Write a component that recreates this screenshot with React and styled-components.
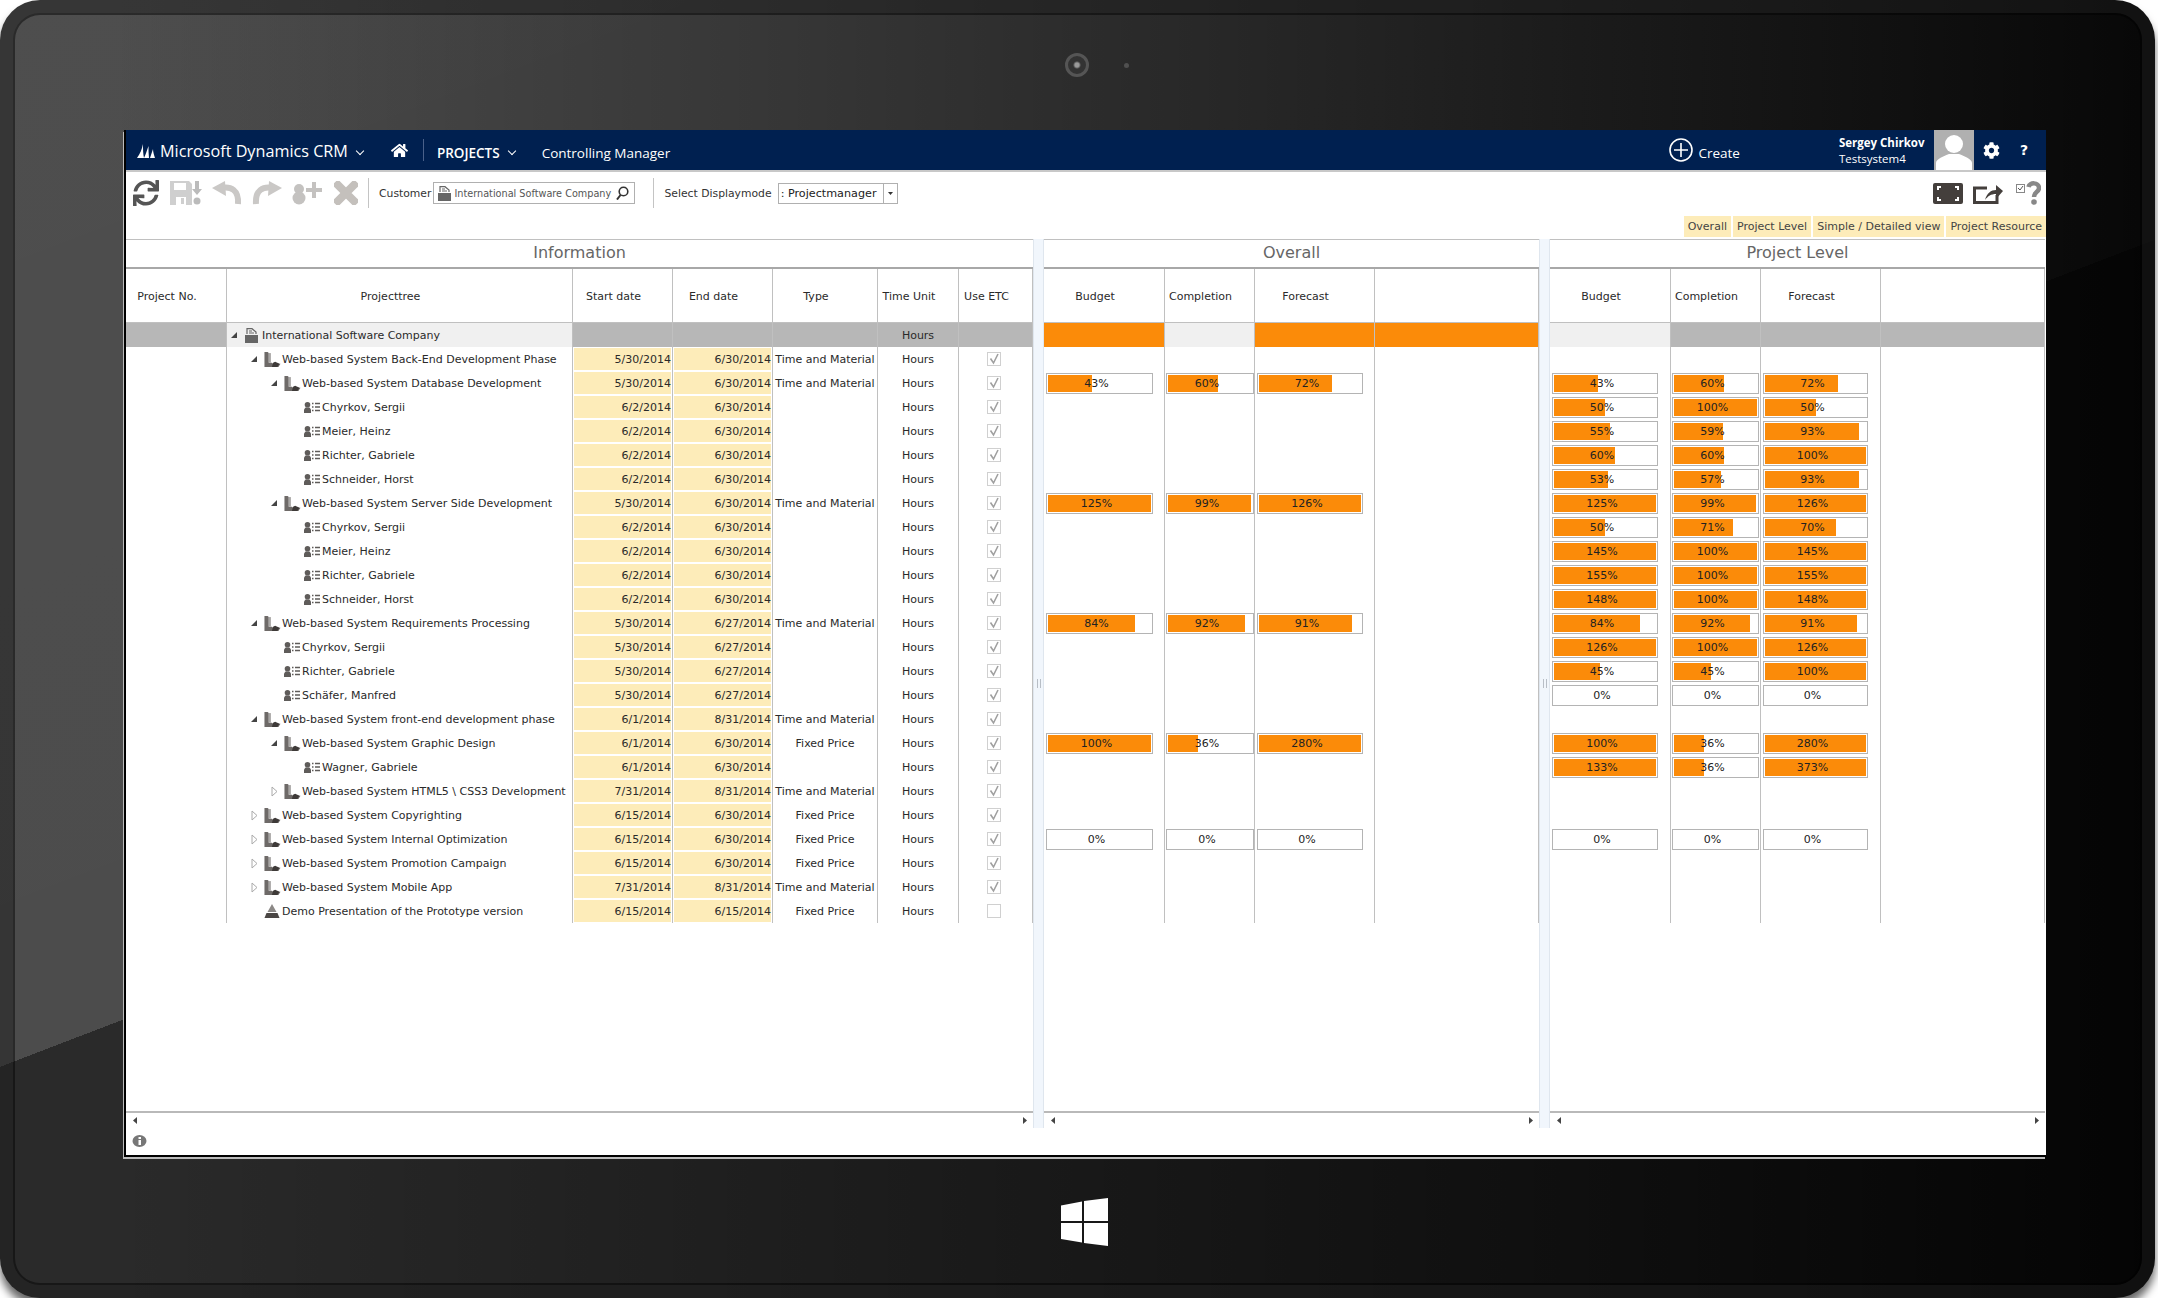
import styled, { createGlobalStyle } from "styled-components";
import { FaSync, FaCog, FaHome } from "react-icons/fa";

const GlobalStyle = createGlobalStyle`
	html, body {
		margin: 0;
		background: #fff;
	}
	* {
		box-sizing: border-box;
	}
`;

const TABLE_FONT = `"DejaVu Sans", Verdana, sans-serif`;
const NAV_FONT = `"Open Sans", "Noto Sans", sans-serif`;

const INFO_COLS = "101px 346px 100px 100px 105px 81px 74px";
const LEVEL_COLS = "121px 90px 120px 164px";

const T = "Time and Material";
const F = "Fixed Price";

// level, icon, open state, name, start, end, type, overall bars, project bars
const ROWS = [
	[1, "project", "open", "Web-based System Back-End Development Phase", "5/30/2014", "6/30/2014", T],
	[2, "project", "open", "Web-based System Database Development", "5/30/2014", "6/30/2014", T, [43, 60, 72], [43, 60, 72]],
	[3, "person", "", "Chyrkov, Sergii", "6/2/2014", "6/30/2014", "", null, [50, 100, 50]],
	[3, "person", "", "Meier, Heinz", "6/2/2014", "6/30/2014", "", null, [55, 59, 93]],
	[3, "person", "", "Richter, Gabriele", "6/2/2014", "6/30/2014", "", null, [60, 60, 100]],
	[3, "person", "", "Schneider, Horst", "6/2/2014", "6/30/2014", "", null, [53, 57, 93]],
	[2, "project", "open", "Web-based System Server Side Development", "5/30/2014", "6/30/2014", T, [125, 99, 126], [125, 99, 126]],
	[3, "person", "", "Chyrkov, Sergii", "6/2/2014", "6/30/2014", "", null, [50, 71, 70]],
	[3, "person", "", "Meier, Heinz", "6/2/2014", "6/30/2014", "", null, [145, 100, 145]],
	[3, "person", "", "Richter, Gabriele", "6/2/2014", "6/30/2014", "", null, [155, 100, 155]],
	[3, "person", "", "Schneider, Horst", "6/2/2014", "6/30/2014", "", null, [148, 100, 148]],
	[1, "project", "open", "Web-based System Requirements Processing", "5/30/2014", "6/27/2014", T, [84, 92, 91], [84, 92, 91]],
	[2, "person", "", "Chyrkov, Sergii", "5/30/2014", "6/27/2014", "", null, [126, 100, 126]],
	[2, "person", "", "Richter, Gabriele", "5/30/2014", "6/27/2014", "", null, [45, 45, 100]],
	[2, "person", "", "Schäfer, Manfred", "5/30/2014", "6/27/2014", "", null, [0, 0, 0]],
	[1, "project", "open", "Web-based System front-end development phase", "6/1/2014", "8/31/2014", T],
	[2, "project", "open", "Web-based System Graphic Design", "6/1/2014", "6/30/2014", F, [100, 36, 280], [100, 36, 280]],
	[3, "person", "", "Wagner, Gabriele", "6/1/2014", "6/30/2014", "", null, [133, 36, 373]],
	[2, "project", "closed", "Web-based System HTML5 \\ CSS3 Development", "7/31/2014", "8/31/2014", T],
	[1, "project", "closed", "Web-based System Copyrighting", "6/15/2014", "6/30/2014", F],
	[1, "project", "closed", "Web-based System Internal Optimization", "6/15/2014", "6/30/2014", F, [0, 0, 0], [0, 0, 0]],
	[1, "project", "closed", "Web-based System Promotion Campaign", "6/15/2014", "6/30/2014", F],
	[1, "project", "closed", "Web-based System Mobile App", "7/31/2014", "8/31/2014", T],
	[1, "milestone", "", "Demo Presentation of the Prototype version", "6/15/2014", "6/15/2014", F],
];

const OVERALL_BARS = [107, 88, 106];
const PROJECT_BARS = [106, 87, 105];

function TreeIcon({ type }) {
	if (type === "company") {
		return (
			<svg width="15" height="15" viewBox="0 0 15 15">
				<path d="M1 15V7h13v8z" fill="#666" />
				<path d="M3 6V.7h5L12 4v2" fill="none" stroke="#666" strokeWidth="1.2" />
				<path d="M5 3h3M5 5h5" stroke="#666" />
			</svg>
		);
	}
	if (type === "project") {
		return (
			<svg width="17" height="15" viewBox="0 0 15 14">
				<path d="M0 0h3l1 1v9h3l1 1h7l-2 3H0z" fill="#6e6a68" />
				<path d="M4 1h2v9H4z" fill="#a8a6a4" />
				<path d="M8 10l2-1 4 2-2 3H7z" fill="#3e3a38" />
			</svg>
		);
	}
	if (type === "person") {
		return (
			<svg width="16" height="11" viewBox="0 0 16 11">
				<circle cx="3.5" cy="2.8" r="2.8" fill="#5f5c5a" />
				<path d="M0 11V7.5L1.500 5.500h4L7 7.5V11z" fill="#5f5c5a" />
				<path d="M8 1.5h1.5M8 5h1.5M8 8.5h1.5M11 1.5h5M11 5h5M11 8.5h5" stroke="#5f5c5a" strokeWidth="1.3" />
			</svg>
		);
	}
	return (
		<svg width="16" height="14" viewBox="0 0 15 14">
			<path d="M7.5 0L12 8H3z" fill="#8b8886" />
			<path d="M0 14l2-5h11l2 5z" fill="#4a4644" />
		</svg>
	);
}

function Toggle({ state }) {
	if (state === "open") {
		return (
			<svg width="6" height="6" viewBox="0 0 6 6">
				<path d="M6 0v6H0z" fill="#444" />
			</svg>
		);
	}
	if (state === "closed") {
		return (
			<svg width="7" height="11" viewBox="0 0 7 11">
				<path d="M1 1l5 4.5L1 10z" fill="#fff" stroke="#aaa" />
			</svg>
		);
	}
	return null;
}

function Check({ on }) {
	return (
		<CheckBox>
			{on && (
				<svg width="12" height="12" viewBox="0 0 12 12">
					<path d="M2.5 5.5L5.5 10L10 1" fill="none" stroke="#a0a0a0" strokeWidth="1.6" />
				</svg>
			)}
		</CheckBox>
	);
}

function Bars({ values, sizes }) {
	return sizes.map((w, i) => (
		<BarCell key={i} $tight={i === 1}>
			{values && (
				<Bar $w={w}>
					<BarFill style={{ width: `${Math.min(values[i], 100)}%` }} />
					<BarLabel>{values[i]}%</BarLabel>
				</Bar>
			)}
		</BarCell>
	));
}

function ScrollBar() {
	return (
		<ScrollRow>
			<svg width="4" height="7" viewBox="0 0 4 7">
				<path d="M4 0v7L0 3.5z" fill="#444" />
			</svg>
			<svg width="4" height="7" viewBox="0 0 4 7">
				<path d="M0 0v7l4-3.5z" fill="#444" />
			</svg>
		</ScrollRow>
	);
}

function Surface() {
	return (
		<Frame>
			<TopBezel>
				<Camera />
				<Sensor />
			</TopBezel>
			<Screen>
				<Nav>
					<svg width="18" height="15" viewBox="0 0 18 15">
						<path d="M0 15C3 11 5 6 6 1c0 5 0 10 1 14zM7 15C9 11 10 7 11.500 3c0 4 0 8 .5 12zM13 15c1-3 2-6 3-9 0 3 1 6 2 9z" fill="#fff" />
					</svg>
					<Brand>Microsoft Dynamics CRM</Brand>
					<Chevron $ml={9} />
					<HomeIcon>
						<FaHome size={17} />
					</HomeIcon>
					<NavDivider />
					<NavStrong>PROJECTS</NavStrong>
					<Chevron $ml={9} />
					<NavLink>Controlling Manager</NavLink>
					<CreateButton>
						<svg width="24" height="24" viewBox="0 0 24 24">
							<circle cx="12" cy="12" r="11" fill="none" stroke="#fff" strokeWidth="1.6" />
							<path d="M12 5v14M5 12h14" stroke="#fff" strokeWidth="1.6" />
						</svg>
						<span>Create</span>
					</CreateButton>
					<UserBlock>
						<b>Sergey Chirkov</b>
						<span>Testsystem4</span>
					</UserBlock>
					<Avatar>
						<svg width="40" height="40" viewBox="0 0 40 40">
							<circle cx="20" cy="14" r="9" fill="#fff" />
							<path d="M2 40v-7c0-4 8-7 13-9h10c5 2 13 5 13 9v7z" fill="#fff" />
						</svg>
					</Avatar>
					<GearIcon>
						<FaCog size={17} />
					</GearIcon>
					<HelpMark>?</HelpMark>
				</Nav>
				<Toolbar>
					<ToolIcon>
						<FaSync size={26} />
					</ToolIcon>
					<svg width="32" height="24" viewBox="0 0 32 24">
						<path d="M0 0h19l3 3v21H0z" fill="#cfcfcf" />
						<path d="M4 2h12v7H4zM6 16h10v8H6z" fill="#fff" />
						<path d="M11 17h3v6h-3z" fill="#cfcfcf" />
						<path d="M25 0h4v8h3l-5 6-5-6h3z" fill="#bbb" />
						<circle cx="27" cy="20" r="3.500" fill="#bbb" />
					</svg>
					<svg width="30" height="24" viewBox="0 0 30 24">
						<path d="M9 7C19 5 27 9 26 23" fill="none" stroke="#cac8c6" strokeWidth="6" />
						<path d="M0 7L13 0l1 15z" fill="#cac8c6" />
					</svg>
					<svg width="30" height="24" viewBox="0 0 30 24">
						<path d="M21 7C11 5 3 9 4 23" fill="none" stroke="#cac8c6" strokeWidth="6" />
						<path d="M30 7L17 0l-1 15z" fill="#cac8c6" />
					</svg>
					<svg width="30" height="24" viewBox="0 0 30 24">
						<circle cx="7" cy="8" r="5" fill="#c4c2c0" />
						<circle cx="7" cy="17" r="6.500" fill="#c4c2c0" />
						<path d="M14 7h6V1h4v6h6v4h-6v6h-4v-6h-6z" fill="#c4c2c0" />
					</svg>
					<CloseIcon width="24" height="24" viewBox="0 0 24 24">
						<path d="M4 4l16 16M20 4L4 20" stroke="#c4c0bc" strokeWidth="8" strokeLinecap="square" />
					</CloseIcon>
					<ToolDivider />
					<ToolLabel>Customer</ToolLabel>
					<SearchBox>
						<TreeIcon type="company" />
						<span>International Software Company</span>
						<svg width="13" height="14" viewBox="0 0 13 14">
							<circle cx="7.500" cy="5.500" r="4.300" fill="none" stroke="#333" strokeWidth="1.6" />
							<path d="M4.500 9L1 13.500" stroke="#333" strokeWidth="2" />
						</svg>
					</SearchBox>
					<ToolDivider $ml={8} />
					<ToolLabel>Select Displaymode</ToolLabel>
					<SelectBox>
						<span>: Projectmanager</span>
						<SelectArrow>
							<svg width="5" height="3" viewBox="0 0 5 3">
								<path d="M0 0h5L2.500 3z" fill="#333" />
							</svg>
						</SelectArrow>
					</SelectBox>
					<ToolRight>
						<svg width="30" height="21" viewBox="0 0 30 21">
							<rect width="30" height="21" rx="2" fill="#443f3c" />
							<path d="M4 3h4v2H6v2H4zM26 3h-4v2h2v2h2zM4 18h4v-2H6v-2H4zM26 18h-4v-2h2v-2h2z" fill="#fff" />
						</svg>
						<svg width="30" height="21" viewBox="0 0 30 21">
							<path d="M14 5H1.500v14.500H24V12" fill="none" stroke="#443f3c" strokeWidth="3" />
							<path d="M12 17c2-7 6-10 11-10V2l7 6-7 8v-5c-5 0-8 2-11 6z" fill="#443f3c" />
						</svg>
						<HelpIcon width="25" height="24" viewBox="0 0 25 24">
							<rect x=".5" y="3.500" width="8" height="8" fill="#fff" stroke="#888" />
							<path d="M2 7l2 2 3-4" fill="none" stroke="#555" />
							<path d="M12.500 6c1-5 10.500-5 10.500 1 0 4-5 4-5 9" fill="none" stroke="#888" strokeWidth="4.500" />
							<circle cx="18" cy="21" r="2.800" fill="#888" />
						</HelpIcon>
					</ToolRight>
				</Toolbar>
				<Tabs>
					<Tab>Overall</Tab>
					<Tab>Project Level</Tab>
					<Tab>Simple / Detailed view</Tab>
					<Tab>Project Resource</Tab>
				</Tabs>
				<Panels>
					<Panel $w={907}>
						<PanelTitle>Information</PanelTitle>
						<PanelBody>
							<Row $cols={INFO_COLS} $h={54}>
								<HeadCell>Project No.</HeadCell>
								<HeadCell>Projecttree</HeadCell>
								<HeadCell>Start date</HeadCell>
								<HeadCell>End date</HeadCell>
								<HeadCell>Type</HeadCell>
								<HeadCell>Time Unit</HeadCell>
								<HeadCell>Use ETC</HeadCell>
							</Row>
							<Row $cols={INFO_COLS}>
								<FillCell $bg="#b7b7b7" />
								<TreeCell $level={0} $bg="#f0f0f0">
									<ToggleSlot>
										<Toggle state="open" />
									</ToggleSlot>
									<IconSlot>
										<TreeIcon type="company" />
									</IconSlot>
									International Software Company
								</TreeCell>
								<FillCell $bg="#b7b7b7" />
								<FillCell $bg="#b7b7b7" />
								<FillCell $bg="#b7b7b7" />
								<TextCell $bg="#b7b7b7">Hours</TextCell>
								<FillCell $bg="#b7b7b7" />
							</Row>
							{ROWS.map((r, i) => (
								<Row key={i} $cols={INFO_COLS}>
									<FillCell />
									<TreeCell $level={r[0]}>
										<ToggleSlot>
											<Toggle state={r[2]} />
										</ToggleSlot>
										<IconSlot>
											<TreeIcon type={r[1]} />
										</IconSlot>
										{r[3]}
									</TreeCell>
									<DateCell>
										<span>{r[4]}</span>
									</DateCell>
									<DateCell>
										<span>{r[5]}</span>
									</DateCell>
									<TextCell>{r[6]}</TextCell>
									<TextCell>Hours</TextCell>
									<CheckCell>
										<Check on={i !== ROWS.length - 1} />
									</CheckCell>
								</Row>
							))}
						</PanelBody>
						<ScrollBar />
					</Panel>
					<Splitter>
						<Grip />
					</Splitter>
					<Panel $w={495}>
						<PanelTitle>Overall</PanelTitle>
						<PanelBody>
							<Row $cols={LEVEL_COLS} $h={54}>
								<HeadCell>Budget</HeadCell>
								<HeadCell>Completion</HeadCell>
								<HeadCell>Forecast</HeadCell>
								<HeadCell />
							</Row>
							<Row $cols={LEVEL_COLS}>
								<FillCell $bg="#fb8b09" />
								<FillCell $bg="#f0f0f0" />
								<FillCell $bg="#fb8b09" />
								<FillCell $bg="#fb8b09" />
							</Row>
							{ROWS.map((r, i) => (
								<Row key={i} $cols={LEVEL_COLS}>
									<Bars values={r[7]} sizes={OVERALL_BARS} />
									<FillCell />
								</Row>
							))}
						</PanelBody>
						<ScrollBar />
					</Panel>
					<Splitter>
						<Grip />
					</Splitter>
					<Panel $w={495}>
						<PanelTitle>Project Level</PanelTitle>
						<PanelBody>
							<Row $cols={LEVEL_COLS} $h={54}>
								<HeadCell>Budget</HeadCell>
								<HeadCell>Completion</HeadCell>
								<HeadCell>Forecast</HeadCell>
								<HeadCell />
							</Row>
							<Row $cols={LEVEL_COLS}>
								<FillCell $bg="#f0f0f0" />
								<FillCell $bg="#b7b7b7" />
								<FillCell $bg="#b7b7b7" />
								<FillCell $bg="#b7b7b7" />
							</Row>
							{ROWS.map((r, i) => (
								<Row key={i} $cols={LEVEL_COLS}>
									<Bars values={r[8]} sizes={PROJECT_BARS} />
									<FillCell />
								</Row>
							))}
						</PanelBody>
						<ScrollBar />
					</Panel>
				</Panels>
				<StatusRow>
					<svg width="15" height="13" viewBox="0 0 15 13">
						<ellipse cx="7.500" cy="6" rx="7" ry="6" fill="#777" />
						<path d="M6.500 5h2.500v5h-2.500zM6.500 2h2.500v2h-2.500z" fill="#fff" />
					</svg>
				</StatusRow>
			</Screen>
			<BottomBezel>
				<svg width="47" height="48" viewBox="0 0 47 48">
					<path d="M0 7.500L21 3.500V23H0zM23 3L47 0V23H23zM0 25H21V44.500L0 41zM23 25H47V48L23 45z" fill="#fff" />
				</svg>
			</BottomBezel>
		</Frame>
	);
}

const Frame = styled.div`
	width: 2155px;
	height: 1298px;
	border-radius: 40px;
	overflow: hidden;
	display: flex;
	flex-direction: column;
	background:
		linear-gradient(90deg, transparent 5%, rgba(0, 0, 0, 0.62) 70%, rgba(0, 0, 0, 0.9) 100%),
		linear-gradient(159deg, rgba(255, 255, 255, 0.17) 0, rgba(255, 255, 255, 0.16) 996px, transparent 996px),
		#2a2a2a;
	box-shadow:
		inset 0 0 0 13px rgba(255, 255, 255, 0.06),
		inset 0 0 0 15px rgba(0, 0, 0, 0.45),
		0 8px 8px rgba(0, 0, 0, 0.6);
`;

const TopBezel = styled.div`
	height: 130px;
	padding: 0 0 0 1065px;
	display: flex;
	align-items: center;
	gap: 35px;
`;

const Camera = styled.div`
	width: 24px;
	height: 24px;
	border-radius: 50%;
	border: 3px solid #555;
	background: radial-gradient(circle, #9a9a9a 0 2px, #333 4px);
`;

const Sensor = styled.div`
	width: 5px;
	height: 5px;
	border-radius: 50%;
	background: #505050;
`;

const BottomBezel = styled.div`
	flex: 1;
	padding: 41px 0 0 1061px;
`;

const Screen = styled.div`
	width: 1922px;
	height: 1027px;
	margin-left: 124px;
	flex: none;
	background: #fff;
	border-left: 2px solid #000;
	border-bottom: 2px solid #000;
	box-shadow: -1px 2px 0 #bbb;
	display: flex;
	flex-direction: column;
`;

const Nav = styled.div`
	height: 42px;
	flex: none;
	background: #002050;
	border-bottom: 2px solid #c8c8c8;
	display: flex;
	align-items: center;
	padding-left: 11px;
	color: #fff;
	font-family: ${NAV_FONT};
`;

const Brand = styled.span`
	font-size: 16.200px;
	margin-left: 5px;
	margin-top: 1px;
`;

const Chevron = styled.span`
	width: 6px;
	height: 6px;
	margin-left: ${(p) => p.$ml}px;
	margin-top: 1px;
	border-right: 1.500px solid #fff;
	border-bottom: 1.500px solid #fff;
	transform: rotate(45deg);
`;

const HomeIcon = styled.span`
	display: flex;
	margin-left: 28px;
`;

const NavDivider = styled.span`
	width: 1px;
	height: 22px;
	background: #4a618a;
	margin: 0 13px 0 15px;
`;

const NavStrong = styled.span`
	font-size: 13.500px;
	font-weight: 600;
	margin-top: 6px;
`;

const NavLink = styled.span`
	font-size: 13.500px;
	margin-left: 27px;
	margin-top: 6px;
`;

const CreateButton = styled.div`
	display: flex;
	align-items: center;
	gap: 5px;
	margin-left: auto;
	font-size: 13.500px;
	span {
		margin-top: 6px;
	}
`;

const UserBlock = styled.div`
	display: flex;
	flex-direction: column;
	margin-left: 99px;
	width: 95px;
	padding-top: 1px;
	font-size: 11.500px;
	line-height: 16px;
	b {
		font-weight: 700;
	}
`;

const Avatar = styled.div`
	width: 40px;
	height: 40px;
	background: #b0b0b0;
	overflow: hidden;
`;

const GearIcon = styled.span`
	display: flex;
	margin-left: 9px;
`;

const HelpMark = styled.span`
	font-family: ${TABLE_FONT};
	font-size: 14px;
	font-weight: 700;
	margin-left: 20px;
	margin-right: 18px;
`;

const Toolbar = styled.div`
	height: 42px;
	flex: none;
	display: flex;
	align-items: center;
	gap: 10px;
	padding: 0 5px 0 7px;
	font-family: ${TABLE_FONT};
	font-size: 10.800px;
	color: #333;
`;

const ToolIcon = styled.span`
	display: flex;
	color: #555;
	margin-right: 1px;
`;

const CloseIcon = styled.svg`
	margin-left: 2px;
`;

const HelpIcon = styled.svg`
	margin-left: 3px;
`;

const ToolDivider = styled.span`
	width: 1px;
	height: 30px;
	background: #c4c4c4;
	margin-left: ${(p) => p.$ml || 0}px;
`;

const ToolLabel = styled.span`
	white-space: nowrap;
`;

const SearchBox = styled.div`
	width: 202px;
	height: 22px;
	margin-left: -8px;
	border: 1px solid #b0b0b0;
	display: flex;
	align-items: center;
	padding: 0 5px 0 3px;
	gap: 2px;
	font-size: 9.700px;
	color: #555;
	span {
		flex: 1;
		white-space: nowrap;
	}
`;

const SelectBox = styled.div`
	width: 120px;
	height: 21px;
	margin-left: -4px;
	border: 1px solid #b0b0b0;
	display: flex;
	align-items: center;
	padding-left: 2px;
	font-size: 11.200px;
	color: #222;
	span {
		flex: 1;
		white-space: nowrap;
	}
`;

const SelectArrow = styled.div`
	width: 14px;
	height: 100%;
	border-left: 1px solid #b0b0b0;
	display: flex;
	align-items: center;
	justify-content: center;
`;

const ToolRight = styled.div`
	margin-left: auto;
	display: flex;
	align-items: center;
	gap: 10px;
`;

const Tabs = styled.div`
	height: 25px;
	flex: none;
	display: flex;
	justify-content: flex-end;
	gap: 2px;
	padding-top: 2px;
`;

const Tab = styled.div`
	height: 21px;
	padding: 0 4px;
	background: #fdecb9;
	font-family: ${TABLE_FONT};
	font-size: 11px;
	line-height: 22px;
	color: #444;
	white-space: nowrap;
`;

const Panels = styled.div`
	flex: 1;
	display: flex;
`;

const Panel = styled.div`
	width: ${(p) => p.$w}px;
	display: flex;
	flex-direction: column;
	font-family: ${TABLE_FONT};
	font-size: 11px;
	color: #2a2a2a;
`;

const PanelTitle = styled.div`
	height: 30px;
	flex: none;
	border-top: 1px solid #c0c0c0;
	border-bottom: 2px solid #a8a8a8;
	text-align: center;
	font-size: 16px;
	line-height: 26px;
	color: #666;
`;

const PanelBody = styled.div`
	flex: 1;
	border-bottom: 2px solid #b9b9b9;
`;

const Row = styled.div`
	display: grid;
	grid-template-columns: ${(p) => p.$cols};
	height: ${(p) => p.$h || 24}px;
`;

const HeadCell = styled.div`
	display: flex;
	align-items: center;
	justify-content: center;
	padding: 2px 18px 0 0;
	border-right: 1px solid #c0c0c0;
	border-bottom: 1px solid #c0c0c0;
	white-space: nowrap;
`;

const FillCell = styled.div`
	border-right: 1px solid #c0c0c0;
	background: ${(p) => p.$bg || "transparent"};
`;

const TreeCell = styled(FillCell)`
	display: flex;
	align-items: center;
	padding-left: ${(p) => 3 + p.$level * 20}px;
	white-space: nowrap;
`;

const ToggleSlot = styled.span`
	width: 13px;
	padding-left: 1px;
	display: flex;
	align-items: center;
	flex: none;
`;

const IconSlot = styled.span`
	width: 19px;
	padding-left: 1px;
	display: flex;
	align-items: center;
	flex: none;
`;

const DateCell = styled(FillCell)`
	padding: 1px;
	span {
		display: block;
		height: 22px;
		background: #fdecb9;
		line-height: 23px;
		text-align: right;
	}
`;

const TextCell = styled(FillCell)`
	display: flex;
	align-items: center;
	justify-content: center;
	white-space: nowrap;
	overflow: hidden;
`;

const CheckCell = styled(TextCell)`
	padding-right: 4px;
`;

const CheckBox = styled.span`
	width: 14px;
	height: 14px;
	border: 1px solid #d0d0d0;
	display: flex;
	align-items: center;
	justify-content: center;
`;

const BarCell = styled(FillCell)`
	padding: 2px 0 0 ${(p) => (p.$tight ? 1 : 2)}px;
`;

const Bar = styled.div`
	position: relative;
	width: ${(p) => p.$w}px;
	height: 21px;
	border: 1px solid #b4b4b4;
	padding: 1px;
`;

const BarFill = styled.div`
	height: 100%;
	background: #fb8b09;
`;

const BarLabel = styled.span`
	position: absolute;
	inset: 0;
	display: flex;
	align-items: center;
	justify-content: center;
	padding-right: 6px;
	color: #222;
`;

const ScrollRow = styled.div`
	height: 15px;
	flex: none;
	display: flex;
	align-items: center;
	justify-content: space-between;
	padding: 0 6px 0 7px;
`;

const Splitter = styled.div`
	width: 11px;
	height: 889px;
	flex: none;
	background: #f1f6fc;
	border-left: 1px solid #dfe6ee;
	border-right: 1px solid #dfe6ee;
	display: flex;
	align-items: center;
	justify-content: center;
`;

const Grip = styled.span`
	width: 4px;
	height: 9px;
	border-left: 1px solid #b8bec6;
	border-right: 1px solid #b8bec6;
`;

const StatusRow = styled.div`
	height: 27px;
	flex: none;
	padding: 6px 0 0 6px;
`;

function App() {
	return (
		<>
			<GlobalStyle />
			<Surface />
		</>
	);
}

export default App;
